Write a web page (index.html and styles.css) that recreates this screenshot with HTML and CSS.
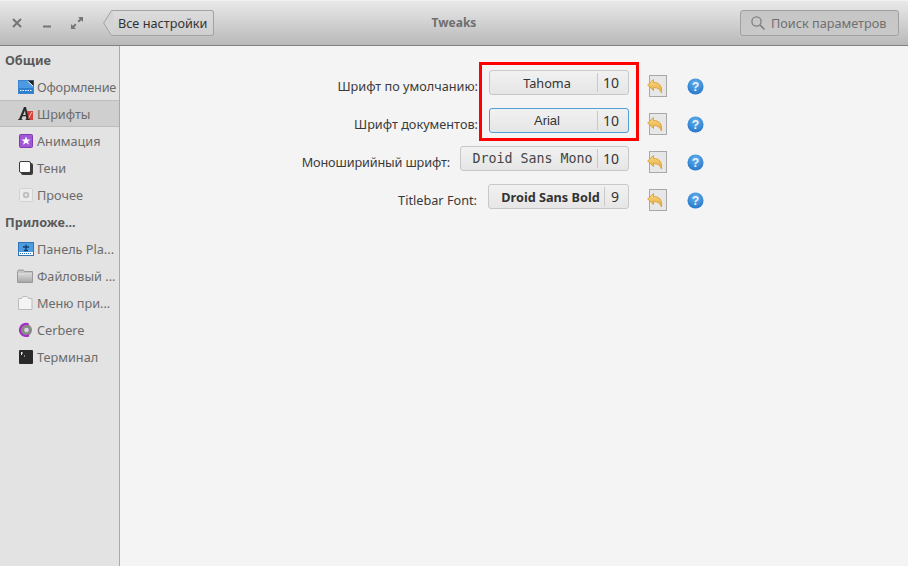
FILE: index.html
```html
<!DOCTYPE html>
<html lang="ru">
<head>
<meta charset="utf-8">
<title>Tweaks</title>
<link rel="stylesheet" href="styles.css">
</head>
<body>
<div class="window">
  <header class="titlebar">
    <div class="controls">
      <svg class="ctl" width="14" height="14" viewBox="0 0 14 14"><path d="M3 3l8 8M11 3l-8 8" stroke="#767676" stroke-width="2" fill="none"/></svg>
      <svg class="ctl" width="14" height="14" viewBox="0 0 14 14"><path d="M3 10.500h8" stroke="#767676" stroke-width="2" fill="none"/></svg>
      <svg class="ctl" width="14" height="14" viewBox="0 0 14 14"><path d="M8 1h5v5l-1.800-1.800L9 6.500 7.500 5l2.300-2.200zM6 13H1V8l1.800 1.800L5 7.500 6.500 9l-2.300 2.200z" fill="#767676"/></svg>
    </div>
    <button class="back"><svg class="back-tip" width="11" height="26" viewBox="0 0 11 26"><path d="M11 .5H8.500L.7 13l7.800 12.500H11z" fill="#d4d4d4" stroke="#a3a3a3"/></svg><span class="back-label">Все настройки</span></button>
    <div class="title">Tweaks</div>
    <div class="search">
      <svg width="16" height="16" viewBox="0 0 16 16"><circle cx="6.500" cy="6.500" r="4.600" fill="none" stroke="#808080" stroke-width="1.300"/><path d="M10 10l4.500 4.500" stroke="#808080" stroke-width="1.700"/></svg>
      <span>Поиск параметров</span>
    </div>
  </header>
  <div class="body">
    <nav class="sidebar">
      <div class="heading">Общие</div>
      <div class="item"><svg class="ico" width="16" height="16" viewBox="0 0 16 16"><rect x=".5" y="1.500" width="15" height="13" fill="#4c9be2" stroke="#3b86cf"/><path d="M9 1.500h6.500V7z" fill="#222"/><path d="M9.500 2l5.500 5" stroke="#fff"/><rect x="1" y="9" width="14" height="5" fill="#2f7fcf"/><path d="M2 11.500h12" stroke="#fff" stroke-dasharray="1.500 1"/></svg><span class="tight">Оформление</span></div>
      <div class="item selected"><svg class="ico" width="16" height="16" viewBox="0 0 16 16"><rect x="8.500" y="5" width="6.500" height="9" fill="#d8413a"/><path d="M10 13l4-7" stroke="#f3c0bc"/><path d="M0 14v-.8h1L6 1h2l2.800 12.200H12V14H7.500v-.8h1l-.6-3H4.600l-1.200 3h1V14zM5 8.900h2.700L7 4.500z" fill="#2a2a2a"/></svg><span>Шрифты</span></div>
      <div class="item"><svg class="ico" width="16" height="16" viewBox="0 0 16 16"><rect x="1.500" y="1.500" width="13" height="13" rx="1" fill="#a356d6" stroke="#7f3bb0"/><path d="M8 3.500l1.300 3h3.200l-2.500 2 1 3.200L8 9.800l-3 1.900 1-3.200-2.500-2h3.200z" fill="#fff"/></svg><span>Анимация</span></div>
      <div class="item"><svg class="ico" width="16" height="16" viewBox="0 0 16 16"><rect x="3" y="3" width="12" height="12" rx="2" fill="#3a3a3a"/><rect x="1.500" y="1.500" width="11" height="11" rx="1.500" fill="#fff" stroke="#3a3a3a"/></svg><span>Тени</span></div>
      <div class="item"><svg class="ico" width="16" height="16" viewBox="0 0 16 16"><rect x="1.500" y="1.500" width="13" height="13" rx="1" fill="#ececec" stroke="#d2d2d2"/><circle cx="8" cy="8" r="3.200" fill="#c0c0c0"/><circle cx="8" cy="8" r="1.200" fill="#ececec"/></svg><span>Прочее</span></div>
      <div class="heading">Приложе...</div>
      <div class="item"><svg class="ico" width="16" height="16" viewBox="0 0 16 16"><rect x=".5" y="1.500" width="15" height="13" fill="#4e9be0" stroke="#2f74b8"/><rect x="1" y="11" width="14" height="3" fill="#fff"/><path d="M8 3.500v6M5 6h6M6 9.500h4" stroke="#123f70" stroke-width="1.300"/><path d="M2 12.500h12" stroke="#2f74b8" stroke-dasharray="1 1"/></svg><span>Панель Pla...</span></div>
      <div class="item"><svg class="ico ico-wide" width="16" height="16" viewBox="0 0 16 16"><defs><linearGradient id="fold" x1="0" y1="0" x2="0" y2="1"><stop offset="0" stop-color="#dcdcdc"/><stop offset="1" stop-color="#a8a8a8"/></linearGradient></defs><path d="M.5 3.500l1-1.500h5l1 1.500h8v11H.5z" fill="#c4c4c4" stroke="#999"/><rect x="1" y="5" width="14" height="9" fill="url(#fold)"/></svg><span>Файловый ...</span></div>
      <div class="item"><svg class="ico ico-wide" width="16" height="16" viewBox="0 0 16 16"><path d="M1.500 3.500h3l1.500-2h4l1.500 2h3.500v11h-13.500z" fill="#f4f4f4" stroke="#bcbcbc"/></svg><span>Меню при...</span></div>
      <div class="item"><svg class="ico" width="16" height="16" viewBox="0 0 16 16"><circle cx="8" cy="8" r="6" fill="#8a8a8a" stroke="#a52ec4" stroke-width="2.200" stroke-dasharray="24 14" transform="rotate(60 8 8)"/><circle cx="8.500" cy="8" r="2.300" fill="#d8d8d8"/></svg><span>Cerbere</span></div>
      <div class="item"><svg class="ico" width="16" height="16" viewBox="0 0 16 16"><rect x="1" y="1" width="14" height="14" rx="1" fill="#2a2a2a"/><path d="M3 4h2M3.500 3v3M6 7h1" stroke="#eee"/></svg><span>Терминал</span></div>
    </nav>
    <main class="content">
      <div class="row">
        <span class="label">Шрифт по умолчанию:</span>
        <button class="font"><span class="fname">Tahoma</span><span class="fsize">10</span></button>
        <svg class="undo" width="20" height="23" viewBox="0 0 20 23"><use href="#undo"/></svg>
        <svg class="help" width="17" height="17" viewBox="0 0 18 18"><use href="#help"/></svg>
      </div>
      <div class="row">
        <span class="label">Шрифт документов:</span>
        <button class="font focused"><span class="fname fname-arial">Arial</span><span class="fsize">10</span></button>
        <svg class="undo" width="20" height="23" viewBox="0 0 20 23"><use href="#undo"/></svg>
        <svg class="help" width="17" height="17" viewBox="0 0 18 18"><use href="#help"/></svg>
      </div>
      <div class="row">
        <span class="label label-mono">Моноширийный шрифт:</span>
        <button class="font wide"><span class="fname fname-mono">Droid Sans Mono</span><span class="fsize">10</span></button>
        <svg class="undo" width="20" height="23" viewBox="0 0 20 23"><use href="#undo"/></svg>
        <svg class="help" width="17" height="17" viewBox="0 0 18 18"><use href="#help"/></svg>
      </div>
      <div class="row">
        <span class="label">Titlebar Font:</span>
        <button class="font bold"><span class="fname fname-bold">Droid Sans Bold</span><span class="fsize fsize-small">9</span></button>
        <svg class="undo" width="20" height="23" viewBox="0 0 20 23"><use href="#undo"/></svg>
        <svg class="help" width="17" height="17" viewBox="0 0 18 18"><use href="#help"/></svg>
      </div>
      <div class="highlight"></div>
    </main>
  </div>
</div>
<svg class="defs" width="0" height="0">
  <defs>
    <linearGradient id="ug" x1="0" y1="0" x2="0" y2="1"><stop offset="0" stop-color="#f8dc8a"/><stop offset="1" stop-color="#e6a535"/></linearGradient>
    <g id="undo">
      <rect x="2.500" y=".5" width="17" height="21" fill="#e7e7e7" stroke="#a8a8a8"/>
      <path d="M.7 10L6.500 4.500V7.500C11.500 7.500 15.500 10 14.500 18 13.500 14.500 10.500 12.500 6.500 12.500V15.500z" fill="url(#ug)" stroke="#dd9f33" stroke-width=".9"/>
    </g>
    <radialGradient id="hg" cx=".5" cy=".3" r=".8"><stop offset="0" stop-color="#63b1ee"/><stop offset="1" stop-color="#1f6fc4"/></radialGradient>
    <g id="help">
      <circle cx="9" cy="9" r="8.500" fill="url(#hg)"/>
      <text x="9" y="13.800" text-anchor="middle" font-family="Liberation Sans" font-size="13" font-weight="700" fill="#e8f3fc">?</text>
    </g>
  </defs>
</svg>
</body>
</html>
```
FILE: styles.css
```css
* { box-sizing: border-box; }
html, body { margin: 0; height: 100%; overflow: hidden; }
body { font-family: "Noto Sans", "Open Sans", sans-serif; font-size: 12.700px; color: #3a3a3a; background: #f4f4f4; }
.window { display: flex; flex-direction: column; width: 908px; height: 566px; }
.titlebar {
  display: flex; align-items: center; position: relative; height: 46px; flex: none;
  padding: 0 9px 0 10px;
  background: linear-gradient(#e9e9e9, #b9b9b9);
  border-top: 1px solid #f2f2f2; border-bottom: 1px solid #808080;
}
.controls { display: flex; gap: 16px; margin-right: 19px; }
.ctl { display: block; }
.back { display: flex; align-items: stretch; height: 26px; padding: 0; margin: 0; border: 0; background: none; font: inherit; color: #333; }
.back-tip { display: block; margin-right: -1px; }
.back-label {
  display: flex; align-items: center; padding: 0 6px 0 5px;
  background: linear-gradient(#dcdcdc, #cfcfcf);
  border: 1px solid #a3a3a3; border-left: 0; border-radius: 0 3px 3px 0;
}
.title { position: absolute; left: 0; right: 0; top: 13px; text-align: center; font-size: 12px; font-weight: 700; color: #6f6f6f; pointer-events: none; }
.search {
  display: flex; align-items: center; gap: 5px; width: 159px; height: 26px; margin-left: auto; padding: 0 9px;
  border: 1px solid #a0a0a0; border-radius: 3px; background: linear-gradient(#c6c6c6, #c9c9c9);
  color: #6f6f6f; white-space: nowrap;
}
.body { display: flex; flex: 1; min-height: 0; }
.sidebar { width: 120px; flex: none; background: #e3e3e3; border-right: 1px solid #a9a9a9; overflow: hidden; }
.heading { height: 27px; line-height: 27px; padding: 1px 0 0 5px; font-weight: 700; color: #5a5a5a; white-space: nowrap; }
.item { display: flex; align-items: center; gap: 3px; height: 27px; padding-left: 18px; color: #6b6b6b; white-space: nowrap; border-top: 1px solid transparent; border-bottom: 1px solid transparent; }
.item.selected { background: #cfcfcf; border-color: #bdbdbd; }
.tight { letter-spacing: -.2px; }
.ico { display: block; flex: none; }
.ico-wide { margin-left: -1px; margin-right: 1px; }
.content { flex: 1; position: relative; padding-top: 24px; }
.row { display: flex; align-items: center; justify-content: flex-end; height: 25px; margin-bottom: 13px; padding-right: 204px; }
.label { margin: 7px 11px 0 0; color: #3a3a3a; white-space: nowrap; }
.label-mono { margin-right: 10px; letter-spacing: -.15px; }
.font {
  display: flex; align-items: center; width: 140px; height: 25px; padding: 0;
  border: 1px solid #c8c8c8; border-radius: 3px; background: linear-gradient(#f1f1f1, #e6e6e6);
  font: inherit; color: #333;
}
.font.wide { width: 169px; }
.font.bold { width: 141px; }
.font.focused { border-color: #4f9fd8; }
.fname { flex: 1; text-align: center; padding-left: 7px; white-space: nowrap; }
.fname-arial { font-family: "Liberation Sans", sans-serif; font-size: 13px; }
.fname-mono { font-family: "DejaVu Sans Mono", monospace; font-size: 13.300px; color: #444; }
.fname-bold { font-weight: 700; padding-left: 8px; }
.fsize { width: 31px; height: 19px; line-height: 19px; padding-right: 4px; text-align: center; border-left: 1px solid #c8c8c8; flex: none; font-size: 14px; }
.fsize-small { width: 24px; padding-right: 3px; }
.undo { margin: 7px 0 0 18px; flex: none; display: block; }
.help { margin: 7px 0 0 20px; flex: none; display: block; }
.highlight { position: absolute; left: 359px; top: 16px; width: 160px; height: 79px; border: 3px solid #f00; pointer-events: none; }
.defs { position: absolute; }
```
